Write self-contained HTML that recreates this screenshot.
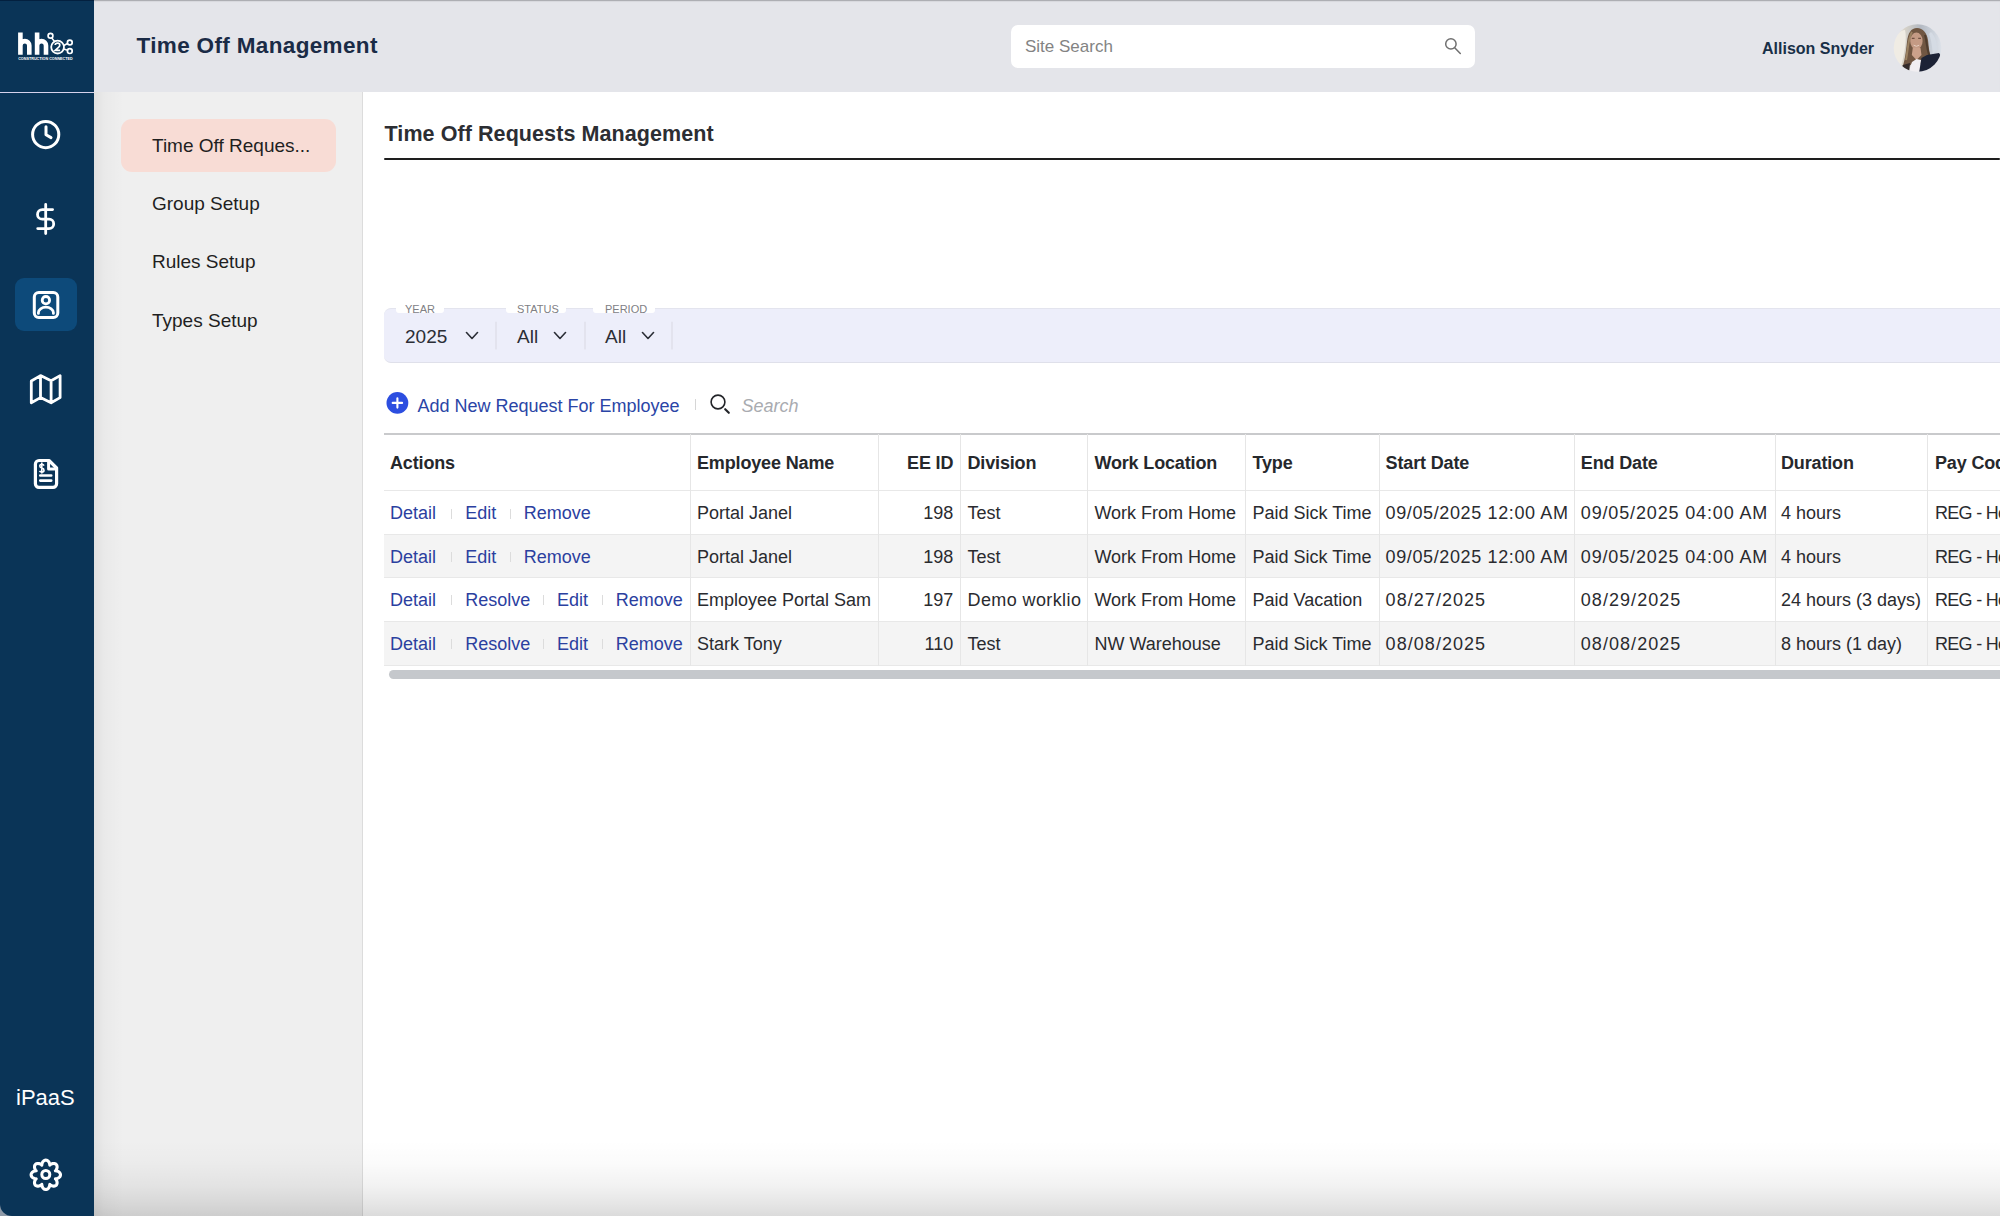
<!DOCTYPE html>
<html><head><meta charset="utf-8">
<style>
*{box-sizing:border-box;margin:0;padding:0}
html,body{width:2000px;height:1216px;overflow:hidden;background:#fff;font-family:"Liberation Sans",sans-serif}
.a{position:absolute;white-space:nowrap;line-height:1}
.ic{position:absolute}
#side{position:absolute;left:0;top:0;width:94px;height:1216px;background:#0a3457;border-bottom-left-radius:12px}
#hdr{position:absolute;left:94px;top:0;width:1906px;height:92px;background:#e4e5ea;border-top:1px solid #adaeb3;box-shadow:inset 0 1px 1px rgba(0,0,0,0.06)}
#nav{position:absolute;left:94px;top:92px;width:269px;height:1124px;background:#efefef;border-right:1px solid #dcdcdc}
#navshadow{position:absolute;left:94px;top:92px;width:30px;height:1124px;background:linear-gradient(90deg,rgba(0,0,0,0.06),rgba(0,0,0,0.025) 35%,rgba(0,0,0,0))}
#botshadow{position:absolute;left:94px;top:1140px;width:1906px;height:76px;background:linear-gradient(180deg,rgba(0,0,0,0) 0%,rgba(0,0,0,0.015) 30%,rgba(0,0,0,0.05) 60%,rgba(0,0,0,0.1) 85%,rgba(0,0,0,0.14) 100%)}
</style></head>
<body>
<div class="a" style="left:0;top:1180px;width:40px;height:36px;background:#8f9aa8"></div>
<div id="side"></div>
<div class="a" style="left:0;top:0;width:94px;height:1px;background:#03203f"></div>
<div class="a" style="left:0;top:91.6px;width:94px;height:1.7px;background:#d6d2ec"></div>
<svg class="ic" style="left:0;top:0" width="94" height="1216" viewBox="0 0 94 1216" fill="none" stroke="#fff" stroke-linecap="round" stroke-linejoin="round">
<g stroke-linecap="butt">
<path d="M20.4 54.7V32.6M20.4 45.6A4.45 4.45 0 0 1 29.3 45.6V54.7" stroke-width="4.6"/>
<path d="M37.1 54.7V32.6M37.1 45.6A4.45 4.45 0 0 1 46 45.6V54.7" stroke-width="4.6"/>
</g>
<circle cx="57.6" cy="47.1" r="6.4" stroke-width="1.8"/>
<circle cx="50.5" cy="35.8" r="2.4" stroke-width="1.7"/>
<circle cx="69.8" cy="42.5" r="2.4" stroke-width="1.7"/>
<circle cx="69.8" cy="51.1" r="2.4" stroke-width="1.7"/>
<path d="M52 38.2L54.5 41.5M63.8 45.5L67.5 43.5M63.8 49L67.5 50.2" stroke-width="1.5"/>
<path d="M55.2 45Q55.3 43.2 57.6 43.2Q59.8 43.2 59.8 45Q59.8 46.3 58.2 47.6L55.2 50.3H60.1" stroke-width="1.7" stroke-linecap="butt" stroke-linejoin="miter"/>
<text x="18.2" y="59.8" fill="#fff" stroke="none" font-family="Liberation Sans" font-weight="bold" font-size="4" textLength="54.5" lengthAdjust="spacingAndGlyphs">CONSTRUCTION CONNECTED</text>
<circle cx="45.7" cy="134.55" r="13.1" stroke-width="3.0"/>
<path d="M46 126.8V134.8L51 137.6" stroke-width="3.0"/>
<path d="M45.7 204.4V233.6M52.6 209.6H42.3A4.8 4.8 0 0 0 42.3 219.2H49A4.7 4.7 0 0 1 49 228.6H37.7" stroke-width="2.8"/>
<rect x="15" y="278" width="62" height="53" rx="9" fill="#0d4a7a" stroke="none"/>
<rect x="34.3" y="292.5" width="23.5" height="25" rx="4.5" stroke-width="3.0"/>
<circle cx="45.9" cy="300.2" r="3.7" stroke-width="2.8"/>
<path d="M38.4 313.4V312.6A7.5 5.4 0 0 1 53.4 312.6V313.4" stroke-width="2.8"/>
<path d="M31.3 381L40.5 375.6L51.1 380.8L60.1 375.6V397.6L51.1 402.8L40.5 397.6L31.3 402.8ZM40.5 375.6V397.6M51.1 380.8V402.8" stroke-width="2.8"/>
<path d="M49 460.5H39A3.6 3.6 0 0 0 35.4 464.1V483.8A3.6 3.6 0 0 0 39 487.4H53A3.6 3.6 0 0 0 56.6 483.8V468Z" stroke-width="3.2"/>
<path d="M48.6 461V469H56" stroke-width="3"/>
<path d="M40.3 475.5H51.2M40.3 480.6H51.2" stroke-width="2.7"/>
<path d="M44 465.6Q43.4 464.2 41.8 464.2Q39.8 464.2 39.8 466Q39.8 467.6 41.8 468Q44 468.5 44 470.2Q44 472 41.8 472Q40.2 472 39.5 470.8M41.8 462.6V473.4" stroke-width="1.6" stroke-linecap="butt"/>
<path d="M45.8 1160.1 L46.4 1160.2 L46.9 1160.3 L47.5 1160.6 L48.0 1161.0 L48.5 1161.5 L48.9 1162.0 L49.2 1162.7 L49.5 1163.4 L49.7 1164.2 L49.8 1165.2 L50.5 1164.5 L51.2 1164.1 L52.0 1163.8 L52.7 1163.6 L53.4 1163.5 L54.0 1163.5 L54.7 1163.6 L55.2 1163.8 L55.7 1164.0 L56.2 1164.4 L56.6 1164.9 L56.8 1165.4 L57.0 1165.9 L57.1 1166.6 L57.1 1167.2 L57.0 1167.9 L56.8 1168.6 L56.5 1169.4 L56.1 1170.1 L55.4 1170.8 L56.4 1170.9 L57.2 1171.1 L57.9 1171.4 L58.6 1171.7 L59.1 1172.1 L59.6 1172.6 L60.0 1173.1 L60.3 1173.7 L60.4 1174.2 L60.5 1174.8 L60.4 1175.4 L60.3 1175.9 L60.0 1176.5 L59.6 1177.0 L59.1 1177.5 L58.6 1177.9 L57.9 1178.2 L57.2 1178.5 L56.4 1178.7 L55.4 1178.8 L56.1 1179.5 L56.5 1180.2 L56.8 1181.0 L57.0 1181.7 L57.1 1182.4 L57.1 1183.0 L57.0 1183.7 L56.8 1184.2 L56.6 1184.7 L56.2 1185.2 L55.7 1185.6 L55.2 1185.8 L54.7 1186.0 L54.0 1186.1 L53.4 1186.1 L52.7 1186.0 L52.0 1185.8 L51.2 1185.5 L50.5 1185.1 L49.8 1184.4 L49.7 1185.4 L49.5 1186.2 L49.2 1186.9 L48.9 1187.6 L48.5 1188.1 L48.0 1188.6 L47.5 1189.0 L46.9 1189.3 L46.4 1189.4 L45.8 1189.5 L45.2 1189.4 L44.7 1189.3 L44.1 1189.0 L43.6 1188.6 L43.1 1188.1 L42.7 1187.6 L42.4 1186.9 L42.1 1186.2 L41.9 1185.4 L41.8 1184.4 L41.1 1185.1 L40.4 1185.5 L39.6 1185.8 L38.9 1186.0 L38.2 1186.1 L37.6 1186.1 L36.9 1186.0 L36.4 1185.8 L35.9 1185.6 L35.4 1185.2 L35.0 1184.7 L34.8 1184.2 L34.6 1183.7 L34.5 1183.0 L34.5 1182.4 L34.6 1181.7 L34.8 1181.0 L35.1 1180.2 L35.5 1179.5 L36.2 1178.8 L35.2 1178.7 L34.4 1178.5 L33.7 1178.2 L33.0 1177.9 L32.5 1177.5 L32.0 1177.0 L31.6 1176.5 L31.3 1175.9 L31.2 1175.4 L31.1 1174.8 L31.2 1174.2 L31.3 1173.7 L31.6 1173.1 L32.0 1172.6 L32.5 1172.1 L33.0 1171.7 L33.7 1171.4 L34.4 1171.1 L35.2 1170.9 L36.2 1170.8 L35.5 1170.1 L35.1 1169.4 L34.8 1168.6 L34.6 1167.9 L34.5 1167.2 L34.5 1166.6 L34.6 1165.9 L34.8 1165.4 L35.0 1164.9 L35.4 1164.4 L35.9 1164.0 L36.4 1163.8 L36.9 1163.6 L37.6 1163.5 L38.2 1163.5 L38.9 1163.6 L39.6 1163.8 L40.4 1164.1 L41.1 1164.5 L41.8 1165.2 L41.9 1164.2 L42.1 1163.4 L42.4 1162.7 L42.7 1162.0 L43.1 1161.5 L43.6 1161.0 L44.1 1160.6 L44.7 1160.3 L45.2 1160.2Z" stroke-width="3.1"/>
<circle cx="45.8" cy="1174.5" r="4" stroke-width="3"/>
</svg>
<div class="a" style="left:16px;top:1087.2px;font-size:22px;color:#fff">iPaaS</div>
<div id="hdr"></div>
<div id="nav"></div>
<div id="navshadow"></div>

<div class="a" style="left:136.5px;top:34.9px;font-size:22.5px;font-weight:bold;letter-spacing:0.35px;color:#1a2b46">Time Off Management</div>
<div class="a" style="left:1011px;top:25px;width:464px;height:43px;background:#fff;border-radius:7px"></div>
<div class="a" style="left:1025px;top:37.6px;font-size:17px;color:#838383">Site Search</div>
<svg class="ic" style="left:1440px;top:34px" width="26" height="26" viewBox="0 0 26 26" fill="none" stroke="#707070" stroke-width="1.5" stroke-linecap="round"><circle cx="10.9" cy="9.9" r="5.2"/><path d="M14.7 13.7L20.3 19.5"/></svg>
<div class="a" style="left:1762px;top:40.7px;font-size:16px;font-weight:bold;color:#182f47">Allison Snyder</div>
<svg class="ic" style="left:1893px;top:24px" width="49" height="49" viewBox="0 0 49 49">
<defs><clipPath id="av"><circle cx="24.5" cy="24" r="23.8"/></clipPath>
<filter id="bl" x="-10%" y="-10%" width="120%" height="120%"><feGaussianBlur stdDeviation="0.75"/></filter>
<linearGradient id="avbg" x1="0" x2="1" y1="0" y2="0"><stop offset="0" stop-color="#eeebe4"/><stop offset="0.22" stop-color="#dcd6ca"/><stop offset="0.55" stop-color="#b3b9c2"/><stop offset="0.8" stop-color="#cdd3dc"/><stop offset="1" stop-color="#e2e6ed"/></linearGradient></defs>
<g clip-path="url(#av)"><g filter="url(#bl)">
<rect x="-2" y="-2" width="53" height="53" fill="url(#avbg)"/>
<path d="M0 18C2 10 8 6 12 6C14 14 12 30 6 49H-2Z" fill="#f0ece4"/>
<path d="M38 8C42 12 44 18 44 26L40 30C39 22 38 14 36 10Z" fill="#d5dbe4"/>
<path d="M8 47C12 38 13 27 14 18C15 9 18 4 24 4C30 4 34 9 35 16C36 24 36 31 40 36L33 40L19 40Z" fill="#6f5642"/>
<path d="M13 36C15 26 15 14 19 8" stroke="#9c8262" stroke-width="2" fill="none"/>
<path d="M32 11C34 18 34 27 37 33" stroke="#503c2e" stroke-width="2" fill="none"/>
<ellipse cx="23.4" cy="17" rx="6.2" ry="8.4" fill="#c49a84"/>
<path d="M18.8 14.3h2.8M25.2 14.3h2.8" stroke="#5b3f32" stroke-width="1"/>
<path d="M20.6 21.2Q23.4 23.4 26.2 21.2" stroke="#e6cdbf" stroke-width="1" fill="none"/>
<path d="M19.8 24L27.5 24L28.5 31L23.5 36L18.8 31Z" fill="#cba18b"/>
<path d="M15 49L19 38L23.5 35L28 36L27 49Z" fill="#f1eef1"/>
<path d="M26 49L28.5 34L34 31L46 29L50 35V49Z" fill="#1a2034"/>
<path d="M4 49L10 41L17 39L16 49Z" fill="#33292a"/>
</g></g></svg>


<div class="a" style="left:121px;top:119px;width:215px;height:53px;background:#f8dcd5;border-radius:11px"></div>
<div class="a" style="left:152px;top:135.9px;font-size:19px;color:#1f1f1f">Time Off Reques...</div>
<div class="a" style="left:152px;top:194.1px;font-size:19px;color:#1f1f1f">Group Setup</div>
<div class="a" style="left:152px;top:252.4px;font-size:19px;color:#1f1f1f">Rules Setup</div>
<div class="a" style="left:152px;top:310.6px;font-size:19px;color:#1f1f1f">Types Setup</div>

<div class="a" style="left:384.5px;top:123.5px;font-size:21.5px;font-weight:bold;letter-spacing:0.08px;color:#2c2e33">Time Off Requests Management</div>
<div class="a" style="left:384px;top:158px;width:1616px;height:2px;background:#1e1e1e;border-radius:1px"></div>

<div class="a" style="left:384px;top:308px;width:1640px;height:55px;background:#edeefa;border-radius:7px;border-top:1px solid #e3e4ee;border-bottom:1px solid #dfe0ea"></div>
<div class="a" style="left:396px;top:304px;width:48px;height:8.5px;background:#fff;border-radius:0 0 3px 3px"></div>
<div class="a" style="left:506px;top:304px;width:60px;height:8.5px;background:#fff;border-radius:0 0 3px 3px"></div>
<div class="a" style="left:593px;top:304px;width:62px;height:8.5px;background:#fff;border-radius:0 0 3px 3px"></div>
<div class="a" style="left:405px;top:303.7px;font-size:11px;color:#808085">YEAR</div>
<div class="a" style="left:517px;top:303.7px;font-size:11px;color:#808085">STATUS</div>
<div class="a" style="left:605px;top:303.7px;font-size:11px;color:#808085">PERIOD</div>
<div class="a" style="left:405px;top:326.9px;font-size:19px;color:#2b2e36">2025</div>
<div class="a" style="left:517px;top:326.9px;font-size:19px;color:#2b2e36">All</div>
<div class="a" style="left:605px;top:326.9px;font-size:19px;color:#2b2e36">All</div>
<svg class="ic" style="left:0;top:0" width="700" height="400" fill="none" stroke="#2b2e36" stroke-width="1.6" stroke-linecap="round" stroke-linejoin="round">
<path d="M466.5 332.5L472 338.5L477.5 332.5M554.5 332.5L560 338.5L565.5 332.5M642.5 332.5L648 338.5L653.5 332.5"/>
<path d="M496 322V349M585 322V349M672 322V349" stroke="#dcdde6" stroke-width="1.2"/>
</svg>

<svg class="ic" style="left:386px;top:392px" width="23" height="23" viewBox="0 0 23 23"><circle cx="11.4" cy="10.9" r="10.9" fill="#2c4ee0"/><path d="M11.4 6.2V15.6M6.7 10.9H16.1" stroke="#fff" stroke-width="2.1" stroke-linecap="round"/></svg>
<div class="a" style="left:417.5px;top:396.5px;font-size:18px;color:#2a45a6">Add New Request For Employee</div>
<div class="a" style="left:694.5px;top:399px;width:1px;height:11px;background:#d6d6d6"></div>
<svg class="ic" style="left:706px;top:392px" width="28" height="26" viewBox="0 0 28 26" fill="none" stroke="#222428" stroke-linecap="round"><circle cx="12" cy="10" r="6.9" stroke-width="1.6"/><path d="M19.2 17.2L22.8 20.8" stroke-width="2.1"/></svg>
<div class="a" style="left:741.5px;top:396.5px;font-size:18px;font-style:italic;color:#a9abb0">Search</div>

<div class="a" style="left:384px;top:432.5px;width:1616px;height:2px;background:#c9cacc"></div>
<div class="a" style="left:384px;top:490.2px;width:1616px;height:43.8px;background:#fff"></div>
<div class="a" style="left:384px;top:534px;width:1616px;height:43.3px;background:#f4f4f4"></div>
<div class="a" style="left:384px;top:577.3px;width:1616px;height:44.0px;background:#fff"></div>
<div class="a" style="left:384px;top:621.3px;width:1616px;height:44.0px;background:#f4f4f4"></div>
<div class="a" style="left:384px;top:489.7px;width:1616px;height:1px;background:#e8e8e8"></div>
<div class="a" style="left:384px;top:533.5px;width:1616px;height:1px;background:#e8e8e8"></div>
<div class="a" style="left:384px;top:576.8px;width:1616px;height:1px;background:#e8e8e8"></div>
<div class="a" style="left:384px;top:620.8px;width:1616px;height:1px;background:#e8e8e8"></div>
<div class="a" style="left:384px;top:664.8px;width:1616px;height:1px;background:#e8e8e8"></div>
<div class="a" style="left:689.5px;top:434px;width:1px;height:231.5px;background:#e6e6e6"></div>
<div class="a" style="left:878.0px;top:434px;width:1px;height:231.5px;background:#e6e6e6"></div>
<div class="a" style="left:960.1px;top:434px;width:1px;height:231.5px;background:#e6e6e6"></div>
<div class="a" style="left:1086.9px;top:434px;width:1px;height:231.5px;background:#e6e6e6"></div>
<div class="a" style="left:1244.9px;top:434px;width:1px;height:231.5px;background:#e6e6e6"></div>
<div class="a" style="left:1378.5px;top:434px;width:1px;height:231.5px;background:#e6e6e6"></div>
<div class="a" style="left:1573.9px;top:434px;width:1px;height:231.5px;background:#e6e6e6"></div>
<div class="a" style="left:1774.7px;top:434px;width:1px;height:231.5px;background:#e6e6e6"></div>
<div class="a" style="left:1927.4px;top:434px;width:1px;height:231.5px;background:#e6e6e6"></div>
<div class="a" style="left:390.0px;top:454.0px;font-size:18px;color:#26282c;font-weight:bold;letter-spacing:-0.15px">Actions</div>
<div class="a" style="left:697.0px;top:454.0px;font-size:18px;color:#26282c;font-weight:bold;letter-spacing:-0.15px">Employee Name</div>
<div class="a" style="left:860px;width:93.3px;text-align:right;top:454.0px;font-size:18px;font-weight:bold;color:#26282c;letter-spacing:-0.15px">EE ID</div>
<div class="a" style="left:967.5px;top:454.0px;font-size:18px;color:#26282c;font-weight:bold;letter-spacing:-0.15px">Division</div>
<div class="a" style="left:1094.4px;top:454.0px;font-size:18px;color:#26282c;font-weight:bold;letter-spacing:-0.15px">Work Location</div>
<div class="a" style="left:1252.5px;top:454.0px;font-size:18px;color:#26282c;font-weight:bold;letter-spacing:-0.15px">Type</div>
<div class="a" style="left:1385.6px;top:454.0px;font-size:18px;color:#26282c;font-weight:bold;letter-spacing:-0.15px">Start Date</div>
<div class="a" style="left:1580.8px;top:454.0px;font-size:18px;color:#26282c;font-weight:bold;letter-spacing:-0.15px">End Date</div>
<div class="a" style="left:1781.0px;top:454.0px;font-size:18px;color:#26282c;font-weight:bold;letter-spacing:-0.15px">Duration</div>
<div class="a" style="left:1935.0px;top:454.0px;font-size:18px;color:#26282c;font-weight:bold;letter-spacing:-0.15px">Pay Code</div>
<div class="a" style="left:390.0px;top:504.0px;font-size:18px;color:#2b409f;">Detail</div>
<div class="a" style="left:465.2px;top:504.0px;font-size:18px;color:#2b409f;">Edit</div>
<div class="a" style="left:523.8px;top:504.0px;font-size:18px;color:#2b409f;">Remove</div>
<div class="a" style="left:451.2px;top:508.7px;width:1px;height:10px;background:#dcdcdc"></div>
<div class="a" style="left:509.9px;top:508.7px;width:1px;height:10px;background:#dcdcdc"></div>
<div class="a" style="left:697.0px;top:504.0px;font-size:18px;color:#2a2b2f;">Portal Janel</div>
<div class="a" style="left:860px;width:93.3px;text-align:right;top:504.0px;font-size:18px;color:#2a2b2f">198</div>
<div class="a" style="left:967.5px;top:504.0px;font-size:18px;color:#2a2b2f;">Test</div>
<div class="a" style="left:1094.4px;top:504.0px;font-size:18px;color:#2a2b2f;">Work From Home</div>
<div class="a" style="left:1252.5px;top:504.0px;font-size:18px;color:#2a2b2f;">Paid Sick Time</div>
<div class="a" style="left:1385.6px;top:504.0px;font-size:18px;color:#2a2b2f;letter-spacing:0.62px">09/05/2025 12:00 AM</div>
<div class="a" style="left:1580.8px;top:504.0px;font-size:18px;color:#2a2b2f;letter-spacing:0.85px">09/05/2025 04:00 AM</div>
<div class="a" style="left:1781.0px;top:504.0px;font-size:18px;color:#2a2b2f;">4 hours</div>
<div class="a" style="left:1935.0px;top:504.0px;font-size:18px;color:#2a2b2f;letter-spacing:-0.7px">REG - Hourly</div>
<div class="a" style="left:390.0px;top:547.5px;font-size:18px;color:#2b409f;">Detail</div>
<div class="a" style="left:465.2px;top:547.5px;font-size:18px;color:#2b409f;">Edit</div>
<div class="a" style="left:523.8px;top:547.5px;font-size:18px;color:#2b409f;">Remove</div>
<div class="a" style="left:451.2px;top:552.2px;width:1px;height:10px;background:#dcdcdc"></div>
<div class="a" style="left:509.9px;top:552.2px;width:1px;height:10px;background:#dcdcdc"></div>
<div class="a" style="left:697.0px;top:547.5px;font-size:18px;color:#2a2b2f;">Portal Janel</div>
<div class="a" style="left:860px;width:93.3px;text-align:right;top:547.5px;font-size:18px;color:#2a2b2f">198</div>
<div class="a" style="left:967.5px;top:547.5px;font-size:18px;color:#2a2b2f;">Test</div>
<div class="a" style="left:1094.4px;top:547.5px;font-size:18px;color:#2a2b2f;">Work From Home</div>
<div class="a" style="left:1252.5px;top:547.5px;font-size:18px;color:#2a2b2f;">Paid Sick Time</div>
<div class="a" style="left:1385.6px;top:547.5px;font-size:18px;color:#2a2b2f;letter-spacing:0.62px">09/05/2025 12:00 AM</div>
<div class="a" style="left:1580.8px;top:547.5px;font-size:18px;color:#2a2b2f;letter-spacing:0.85px">09/05/2025 04:00 AM</div>
<div class="a" style="left:1781.0px;top:547.5px;font-size:18px;color:#2a2b2f;">4 hours</div>
<div class="a" style="left:1935.0px;top:547.5px;font-size:18px;color:#2a2b2f;letter-spacing:-0.7px">REG - Hourly</div>
<div class="a" style="left:390.0px;top:590.6px;font-size:18px;color:#2b409f;">Detail</div>
<div class="a" style="left:465.2px;top:590.6px;font-size:18px;color:#2b409f;">Resolve</div>
<div class="a" style="left:557.0px;top:590.6px;font-size:18px;color:#2b409f;">Edit</div>
<div class="a" style="left:615.8px;top:590.6px;font-size:18px;color:#2b409f;">Remove</div>
<div class="a" style="left:451.2px;top:595.3px;width:1px;height:10px;background:#dcdcdc"></div>
<div class="a" style="left:543.2px;top:595.3px;width:1px;height:10px;background:#dcdcdc"></div>
<div class="a" style="left:601.8px;top:595.3px;width:1px;height:10px;background:#dcdcdc"></div>
<div class="a" style="left:697.0px;top:590.6px;font-size:18px;color:#2a2b2f;">Employee Portal Sam</div>
<div class="a" style="left:860px;width:93.3px;text-align:right;top:590.6px;font-size:18px;color:#2a2b2f">197</div>
<div class="a" style="left:967.5px;top:590.6px;font-size:18px;color:#2a2b2f;letter-spacing:0.4px">Demo worklio</div>
<div class="a" style="left:1094.4px;top:590.6px;font-size:18px;color:#2a2b2f;">Work From Home</div>
<div class="a" style="left:1252.5px;top:590.6px;font-size:18px;color:#2a2b2f;">Paid Vacation</div>
<div class="a" style="left:1385.6px;top:590.6px;font-size:18px;color:#2a2b2f;letter-spacing:1.05px">08/27/2025</div>
<div class="a" style="left:1580.8px;top:590.6px;font-size:18px;color:#2a2b2f;letter-spacing:1.05px">08/29/2025</div>
<div class="a" style="left:1781.0px;top:590.6px;font-size:18px;color:#2a2b2f;">24 hours (3 days)</div>
<div class="a" style="left:1935.0px;top:590.6px;font-size:18px;color:#2a2b2f;letter-spacing:-0.7px">REG - Hourly</div>
<div class="a" style="left:390.0px;top:634.6px;font-size:18px;color:#2b409f;">Detail</div>
<div class="a" style="left:465.2px;top:634.6px;font-size:18px;color:#2b409f;">Resolve</div>
<div class="a" style="left:557.0px;top:634.6px;font-size:18px;color:#2b409f;">Edit</div>
<div class="a" style="left:615.8px;top:634.6px;font-size:18px;color:#2b409f;">Remove</div>
<div class="a" style="left:451.2px;top:639.3px;width:1px;height:10px;background:#dcdcdc"></div>
<div class="a" style="left:543.2px;top:639.3px;width:1px;height:10px;background:#dcdcdc"></div>
<div class="a" style="left:601.8px;top:639.3px;width:1px;height:10px;background:#dcdcdc"></div>
<div class="a" style="left:697.0px;top:634.6px;font-size:18px;color:#2a2b2f;">Stark Tony</div>
<div class="a" style="left:860px;width:93.3px;text-align:right;top:634.6px;font-size:18px;color:#2a2b2f">110</div>
<div class="a" style="left:967.5px;top:634.6px;font-size:18px;color:#2a2b2f;">Test</div>
<div class="a" style="left:1094.4px;top:634.6px;font-size:18px;color:#2a2b2f;">NW Warehouse</div>
<div class="a" style="left:1252.5px;top:634.6px;font-size:18px;color:#2a2b2f;">Paid Sick Time</div>
<div class="a" style="left:1385.6px;top:634.6px;font-size:18px;color:#2a2b2f;letter-spacing:1.05px">08/08/2025</div>
<div class="a" style="left:1580.8px;top:634.6px;font-size:18px;color:#2a2b2f;letter-spacing:1.05px">08/08/2025</div>
<div class="a" style="left:1781.0px;top:634.6px;font-size:18px;color:#2a2b2f;">8 hours (1 day)</div>
<div class="a" style="left:1935.0px;top:634.6px;font-size:18px;color:#2a2b2f;letter-spacing:-0.7px">REG - Hourly</div>
<div class="a" style="left:388.6px;top:670px;width:1640px;height:9.4px;background:#c5c8cc;border-radius:5px"></div>

<div id="botshadow"></div>
</body></html>
